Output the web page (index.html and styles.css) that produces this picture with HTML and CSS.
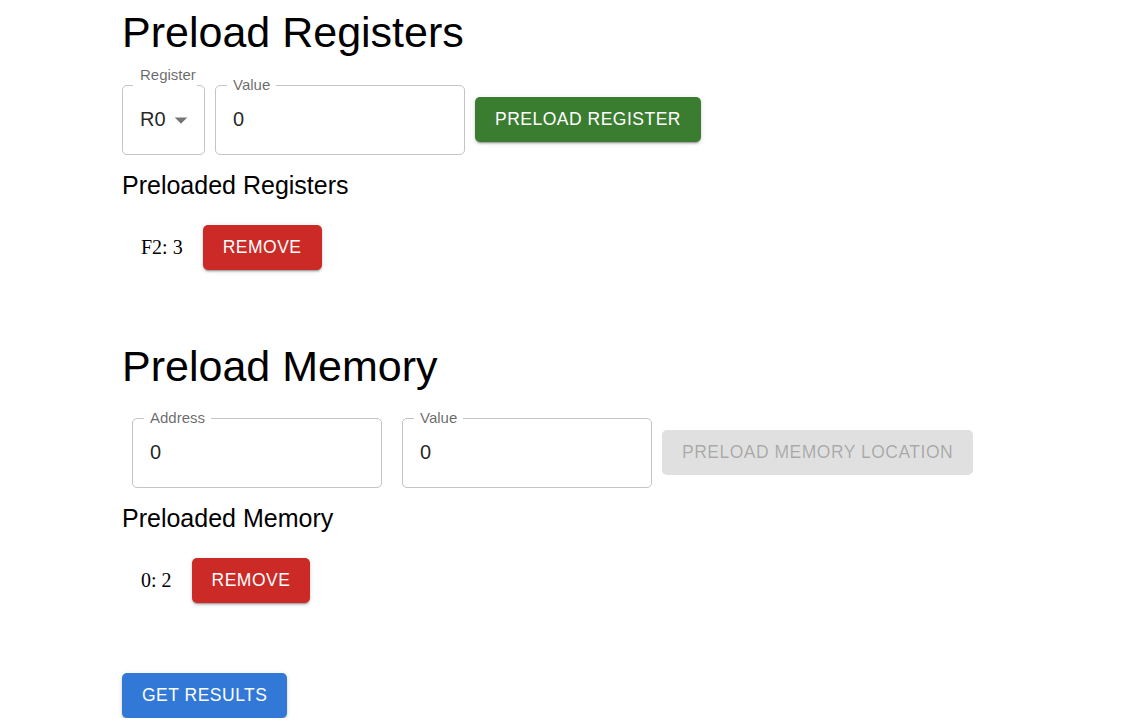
FILE: index.html
```html
<!DOCTYPE html>
<html>
<head>
<meta charset="utf-8">
<link rel="stylesheet" href="styles.css">
</head>
<body>
<div class="page">
  <h1 class="title">Preload Registers</h1>
  <div class="form-row">
    <div class="field select-field">
      <span class="notch"></span>
      <span class="select-label">Register</span>
      <span class="field-value">R0</span>
      <svg class="drop" viewBox="0 0 24 24" width="30" height="30"><path d="M7 10l5 5 5-5z" fill="rgba(0,0,0,0.54)"/></svg>
    </div>
    <div class="field text-field">
      <span class="float-label">Value</span>
      <span class="field-value">0</span>
    </div>
    <button class="btn btn-green">PRELOAD REGISTER</button>
  </div>
  <h2 class="subtitle">Preloaded Registers</h2>
  <div class="item">
    <span class="item-text">F2: 3</span>
    <button class="btn btn-red">REMOVE</button>
  </div>

  <h1 class="title title-mem">Preload Memory</h1>
  <div class="form-row form-row-mem">
    <div class="field text-field">
      <span class="float-label">Address</span>
      <span class="field-value">0</span>
    </div>
    <div class="field text-field">
      <span class="float-label">Value</span>
      <span class="field-value">0</span>
    </div>
    <button class="btn btn-disabled">PRELOAD MEMORY LOCATION</button>
  </div>
  <h2 class="subtitle">Preloaded Memory</h2>
  <div class="item">
    <span class="item-text">0: 2</span>
    <button class="btn btn-red">REMOVE</button>
  </div>

  <button class="btn btn-blue results">GET RESULTS</button>
</div>
</body>
</html>
```
FILE: styles.css
```css
html, body {
  margin: 0;
  padding: 0;
  background: #ffffff;
}
.page {
  padding: 7px 0 0 122px;
  font-family: "Liberation Sans", Arial, sans-serif;
  color: #000;
}
.title {
  margin: 0;
  font-size: 43px;
  line-height: 50px;
  font-weight: 400;
}
.title-mem {
  margin-top: 71px;
}
.subtitle {
  margin: 15px 0 0 0;
  font-size: 25px;
  line-height: 30px;
  font-weight: 400;
}
.form-row {
  margin-top: 28px;
  display: flex;
  align-items: flex-start;
  gap: 10px;
}
.form-row .btn {
  margin-top: 12px;
}
.form-row-mem {
  margin-top: 27px;
  padding-left: 10px;
}
.form-row-mem .text-field + .text-field {
  margin-left: 10px;
}
.field {
  position: relative;
  box-sizing: border-box;
  height: 70px;
  border: 1px solid rgba(0,0,0,0.23);
  border-radius: 5px;
  display: flex;
  align-items: center;
  padding-bottom: 1px;
}
.select-field {
  width: 83px;
  padding-left: 17px;
}
.text-field {
  width: 250px;
  padding-left: 17px;
}
.field-value {
  font-size: 20px;
  color: rgba(0,0,0,0.87);
}
.drop {
  display: block;
  flex: none;
}
.notch {
  position: absolute;
  top: -1px;
  left: 10px;
  width: 64px;
  height: 2px;
  background: #fff;
}
.select-label {
  position: absolute;
  top: -20px;
  left: 17px;
  font-size: 15px;
  line-height: 18px;
  color: rgba(0,0,0,0.6);
}
.float-label {
  position: absolute;
  top: -10px;
  left: 11px;
  padding: 0 6px;
  background: #fff;
  font-size: 15px;
  line-height: 18px;
  color: rgba(0,0,0,0.6);
}
.btn {
  box-sizing: border-box;
  height: 45px;
  padding: 0 20px;
  border: none;
  border-radius: 5px;
  font-family: "Liberation Sans", Arial, sans-serif;
  font-size: 17.5px;
  letter-spacing: 0.5px;
  color: #fff;
  cursor: pointer;
  box-shadow: 0px 3px 1px -2px rgba(0,0,0,0.2), 0px 2px 2px 0px rgba(0,0,0,0.14), 0px 1px 5px 0px rgba(0,0,0,0.12);
}
.btn-green { background: #3a7d30; }
.btn-red { background: #cb2a26; }
.btn-blue { background: #3278d7; }
.btn-disabled {
  background: #e0e0e0;
  color: rgba(0,0,0,0.26);
  box-shadow: none;
  cursor: default;
}
.item {
  margin-top: 25px;
  display: flex;
  align-items: center;
  padding-left: 19px;
}
.item-text {
  font-family: "Liberation Serif", "Times New Roman", serif;
  font-size: 20px;
  margin-right: 20px;
}
.results {
  display: block;
  margin-top: 70px;
}
```
